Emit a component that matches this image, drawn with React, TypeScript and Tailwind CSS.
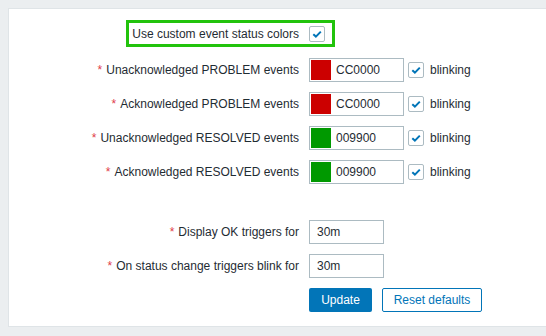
import React from "react";

const font = { fontFamily: '"Liberation Sans", Arial, sans-serif' };

function Check() {
  return (
    <span className="flex h-4 w-4 shrink-0 items-center justify-center rounded-[2px] border border-[#acbbc2] bg-white">
      <svg width="12" height="12" viewBox="0 0 12 12">
        <path d="M2.3 6.2 L4.9 8.6 L9.8 3.6" fill="none" stroke="#0275b8" strokeWidth="2" strokeLinecap="butt" strokeLinejoin="miter" />
      </svg>
    </span>
  );
}

function Label({ children, required = true }: { children: React.ReactNode; required?: boolean }) {
  return (
    <div className="flex items-center justify-end whitespace-nowrap text-right">
      {required && <span className="mr-[4px] text-[#e0404a]">*</span>}
      <span>{children}</span>
    </div>
  );
}

function ColorRow({ label, color, hex }: { label: string; color: string; hex: string }) {
  return (
    <div className="grid h-6 grid-cols-[290px_1fr] gap-x-[10px]">
      <Label>{label}</Label>
      <div className="flex items-center">
        <div className="flex h-6 w-[95px] items-center border border-[#acbbc2] bg-white pl-[1px]">
          <span className="h-5 w-5 shrink-0" style={{ backgroundColor: color }} />
          <span className="ml-[5px]">{hex}</span>
        </div>
        <span className="ml-[4px]">
          <Check />
        </span>
        <span className="ml-[6px]">blinking</span>
      </div>
    </div>
  );
}

function TextRow({ label, value }: { label: string; value: string }) {
  return (
    <div className="grid h-6 grid-cols-[290px_1fr] gap-x-[10px]">
      <Label>{label}</Label>
      <div className="flex items-center">
        <div className="flex h-6 w-[75px] items-center border border-[#acbbc2] bg-white px-[7px]">{value}</div>
      </div>
    </div>
  );
}

export default function App() {
  return (
    <div className="h-[336px] w-[546px] overflow-hidden bg-[#ebeef0] pl-2 pt-2" style={font}>
      <div className="relative h-[319px] w-[560px] border border-[#dfe4e7] bg-white text-[12px] leading-[14px] text-[#1f2c33]">
        <div className="absolute left-[117px] top-[11px] h-[27px] w-[209px] border-[3px] border-[#22c30c]" />
        <div className="flex flex-col pt-[13px]">
          <div className="grid h-6 grid-cols-[290px_1fr] gap-x-[10px]">
            <Label required={false}>Use custom event status colors</Label>
            <div className="flex items-center">
              <Check />
            </div>
          </div>
          <div className="mt-[12px] flex flex-col gap-[10px]">
            <ColorRow label="Unacknowledged PROBLEM events" color="#cc0000" hex="CC0000" />
            <ColorRow label="Acknowledged PROBLEM events" color="#cc0000" hex="CC0000" />
            <ColorRow label="Unacknowledged RESOLVED events" color="#009900" hex="009900" />
            <ColorRow label="Acknowledged RESOLVED events" color="#009900" hex="009900" />
          </div>
          <div className="mt-[36px] flex flex-col gap-[10px]">
            <TextRow label="Display OK triggers for" value="30m" />
            <TextRow label="On status change triggers blink for" value="30m" />
            <div className="grid h-6 grid-cols-[290px_1fr] gap-x-[10px]">
              <div />
              <div className="flex gap-[10px]">
                <button className="flex h-6 w-[63px] items-center justify-center rounded-[2px] bg-[#0275b8] text-white">Update</button>
                <button className="flex h-6 w-[100px] items-center justify-center rounded-[2px] border border-[#0275b8] bg-white text-[#0275b8]">Reset defaults</button>
              </div>
            </div>
          </div>
        </div>
      </div>
    </div>
  );
}
